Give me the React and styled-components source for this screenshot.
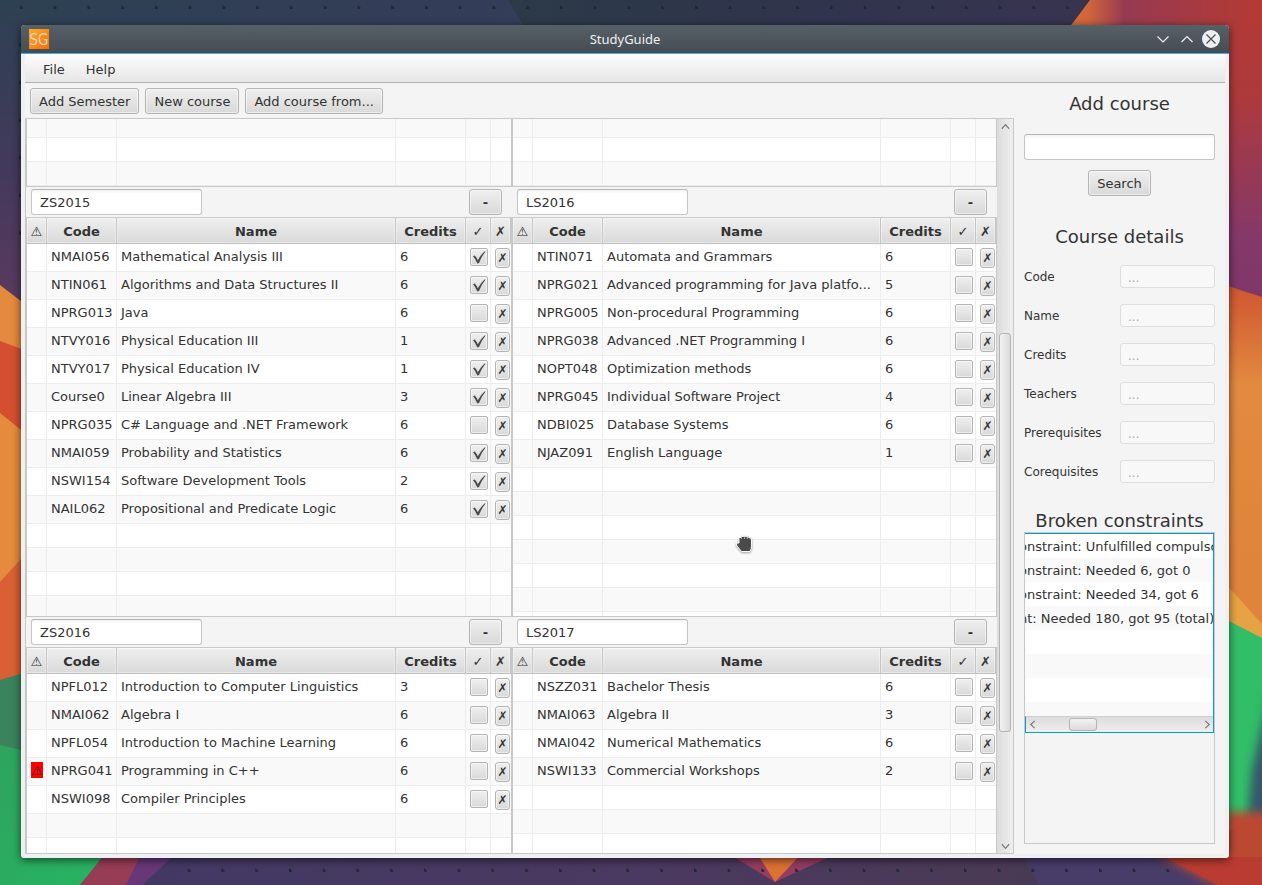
import React from "react";
import styled, { createGlobalStyle, css } from "styled-components";

const GlobalStyle = createGlobalStyle`
  *, *::before, *::after { box-sizing: border-box; }
  body {
    margin: 0;
    font-family: "DejaVu Sans", Verdana, sans-serif;
    font-size: 13px;
    color: #333;
  }
  button, input { font: inherit; color: inherit; }
`;

const raised = css`
  border: 1px solid #b4b4b4;
  border-radius: 3px;
  background: linear-gradient(#efefef, #d9d9d9);
  box-shadow: inset 0 0 0 1px rgba(255, 255, 255, 0.5);
`;

const Desktop = styled.div`
  position: relative;
  display: flex;
  height: 100vh;
  min-height: 600px;
  padding: 25px 33px 27px 21px;
  overflow: hidden;
  background: #3b3a55;
`;

const Wallpaper = styled.svg`
  position: absolute;
  inset: 0;
  width: 100%;
  height: 100%;
`;

const Window = styled.div`
  position: relative;
  display: flex;
  flex: 1;
  flex-direction: column;
  min-width: 0;
  border-radius: 4px 4px 3px 3px;
  background: #eff0f1;
  box-shadow: 0 2px 8px rgba(0, 0, 0, 0.6);
`;

const TitleBar = styled.header`
  display: grid;
  grid-template-columns: 1fr auto 1fr;
  align-items: center;
  height: 29px;
  padding: 0 8px;
  border-bottom: 1px solid #3daee9;
  border-radius: 4px 4px 0 0;
  background: linear-gradient(#566067, #454d53);
`;

const Title = styled.h1`
  margin: 0;
  color: #eff0f1;
  font: 400 13px/20px "Noto Sans", sans-serif;
`;

const WindowControls = styled.div`
  display: flex;
  justify-content: flex-end;
  align-items: center;
  gap: 4px;
`;

const PlainButton = styled.button`
  display: flex;
  align-items: center;
  justify-content: center;
  padding: 0;
  border: 0;
  background: none;
`;

const Client = styled.div`
  display: flex;
  flex: 1;
  flex-direction: column;
  min-height: 0;
  margin: 0 4px 4px;
  background: #f4f4f4;
`;

const MenuBar = styled.nav`
  display: flex;
  gap: 1px;
  height: 29px;
  padding: 0 8px;
  border-bottom: 1px solid #b2b2b2;
  background: linear-gradient(#fdfdfd, #e6e6e6);
`;

const MenuItem = styled.button`
  padding: 2px 10px 0;
  border: 0;
  background: none;
`;

const Content = styled.div`
  display: flex;
  flex: 1;
  min-height: 0;
`;

const Planner = styled.main`
  display: flex;
  flex: 1;
  flex-direction: column;
  min-width: 0;
`;

const Toolbar = styled.div`
  display: flex;
  gap: 6px;
  padding: 5px 5px 4px;
`;

const Button = styled.button`
  ${raised}
  height: 26px;
  padding: 2px 8px 0;
  min-width: 33px;
  white-space: nowrap;
  line-height: 22px;
  font-weight: ${(p) => (p.$strong ? 700 : 400)};
`;

const ScrollPane = styled.div`
  display: flex;
  flex: 1;
  min-height: 0;
  border: 1px solid #c8c8c8;
`;

const Semesters = styled.div`
  display: grid;
  flex: 1;
  grid-template-columns: 486fr 485fr;
  grid-template-rows: 68px 430px 430px;
  min-width: 0;
  overflow: hidden;
`;

const Semester = styled.section`
  display: flex;
  flex-direction: column;
  justify-content: flex-end;
  min-width: 0;
  min-height: 0;
  overflow: hidden;
`;

const SemesterBar = styled.div`
  display: flex;
  justify-content: space-between;
  flex: none;
  padding: 2px 10px 2px 5px;
`;

const TextField = styled.input`
  width: ${(p) => (p.$wide ? "100%" : "171px")};
  height: 26px;
  padding: 0 8px;
  border: 1px solid #c6c6c6;
  border-top-color: #b5b5b5;
  border-radius: 3px;
  background: linear-gradient(#f3f3f3, #fff 4px);
`;

const TableFrame = styled.div`
  display: flex;
  flex: 1;
  flex-direction: column;
  justify-content: ${(p) => (p.$fromEnd ? "flex-end" : "flex-start")};
  min-height: 0;
  overflow: hidden;
  border: 1px solid #c8c8c8;
  border-top-width: ${(p) => (p.$fromEnd ? 0 : 1)}px;
`;

const Table = styled.table`
  flex: none;
  width: 100%;
  table-layout: fixed;
  border-collapse: separate;
  border-spacing: 0;
`;

const Col = styled.col`
  width: ${(p) => p.$w}px;
`;

const HeadCell = styled.th`
  height: 26px;
  padding: 3px 0 0;
  border-right: 1px solid #c4c4c4;
  border-bottom: 1px solid #c0c0c0;
  background: linear-gradient(#efefef, #d9d9d9);
  box-shadow: inset 0 0 0 1px rgba(255, 255, 255, 0.4);
  line-height: 22px;
  text-align: center;
  font-weight: ${(p) => (p.$symbol ? 400 : 700)};
`;

const Row = styled.tr`
  height: ${(p) => (p.$empty ? 24 : 28)}px;
  background: #fff;
  &:nth-child(even) { background: #f9f9f9; }
`;

const Cell = styled.td`
  padding: 0 4px;
  overflow: hidden;
  border-right: 1px solid #ededed;
  border-bottom: 1px solid #ededed;
  line-height: 18px;
  padding-top: ${(p) => (p.$empty ? 0 : 4)}px;
  vertical-align: top;
  white-space: nowrap;
  &:last-child { padding-right: 0; border-right: 0; }
`;

const Warning = styled.span`
  display: block;
  width: 12px;
  height: 16px;
  background: #f00;
`;

const CheckWrap = styled.label`
  position: relative;
  display: block;
  width: 18px;
  height: 18px;
  svg { position: absolute; inset: 0; pointer-events: none; }
  input:not(:checked) + svg { display: none; }
`;

const CheckInput = styled.input`
  ${raised}
  appearance: none;
  display: block;
  width: 18px;
  height: 18px;
  margin: 0;
  border-radius: 2px;
`;

const RemoveButton = styled.button`
  ${raised}
  display: block;
  width: 15px;
  height: 20px;
  padding: 0;
  line-height: 18px;
  font-weight: 700;
  font-size: 12px;
`;

const VScroll = styled.div`
  display: grid;
  grid-template-rows: 14px 200fr 399fr 107fr 14px;
  width: 16px;
  padding: 0 2px;
  background: linear-gradient(90deg, #dcdcdc, #efefef);
`;

const HScroll = styled.div`
  display: grid;
  grid-template-columns: 12px 31fr 28fr 105fr 12px;
  height: 16px;
  padding: 1px 0;
  border-top: 1px solid #d0d0d0;
  border-left: 1px solid #039ed3;
  background: linear-gradient(#dcdcdc, #efefef);
`;

const Thumb = styled.div`
  border: 1px solid #b4b4b4;
  border-radius: 3px;
  background: linear-gradient(${(p) => (p.$vertical ? "90deg" : "180deg")}, #f3f3f3, #dadada);
`;

const Sidebar = styled.aside`
  display: flex;
  flex: none;
  flex-direction: column;
  align-items: center;
  width: 211px;
  padding: 10px;
`;

const Heading = styled.h2`
  margin: 0;
  font-size: 18px;
  font-weight: 400;
  line-height: 22px;
`;

const SearchForm = styled.form`
  display: flex;
  flex-direction: column;
  align-items: center;
  gap: 10px;
  width: 100%;
  margin: 19px 0 30px;
`;

const Details = styled.div`
  display: flex;
  flex-direction: column;
  gap: 16px;
  width: 100%;
  margin: 17px 0 27px;
`;

const DetailRow = styled.label`
  display: flex;
  justify-content: space-between;
  align-items: center;
  font-size: 12px;
`;

const DetailField = styled.input`
  width: 95px;
  height: 23px;
  padding: 2px 7px 0;
  border: 1px solid #dedede;
  border-radius: 3px;
  background: #f8f8f8;
  &::placeholder { color: #aaa; opacity: 1; }
`;

const ConstraintBox = styled.div`
  flex: 1;
  width: 100%;
  min-height: 0;
  overflow: hidden;
  border: 1px solid #c8c8c8;
`;

const ConstraintPane = styled.div`
  border: solid #039ed3;
  border-width: 1px 1px 1px 0;
`;

const ConstraintList = styled.ul`
  height: 182px;
  margin: 0;
  padding: 0;
  overflow: hidden;
  list-style: none;
`;

const Constraint = styled.li`
  height: 24px;
  overflow: hidden;
  background: #fff;
  line-height: 26px;
  white-space: nowrap;
  text-indent: -6px;
  &:nth-child(even) { background: #f9f9f9; }
`;

const HandCursor = styled.svg`
  position: absolute;
  left: 735px;
  top: 534px;
  filter: drop-shadow(0 1px 1px rgba(0, 0, 0, 0.35));
`;

const semesters = [
  {
    name: "ZS2015",
    courses: [
      ["NMAI056", "Mathematical Analysis III", 6, true],
      ["NTIN061", "Algorithms and Data Structures II", 6, true],
      ["NPRG013", "Java", 6, false],
      ["NTVY016", "Physical Education III", 1, true],
      ["NTVY017", "Physical Education IV", 1, true],
      ["Course0", "Linear Algebra III", 3, true],
      ["NPRG035", "C# Language and .NET Framework", 6, false],
      ["NMAI059", "Probability and Statistics", 6, true],
      ["NSWI154", "Software Development Tools", 2, true],
      ["NAIL062", "Propositional and Predicate Logic", 6, true],
    ],
  },
  {
    name: "LS2016",
    courses: [
      ["NTIN071", "Automata and Grammars", 6, false],
      ["NPRG021", "Advanced programming for Java platfo...", 5, false],
      ["NPRG005", "Non-procedural Programming", 6, false],
      ["NPRG038", "Advanced .NET Programming I", 6, false],
      ["NOPT048", "Optimization methods", 6, false],
      ["NPRG045", "Individual Software Project", 4, false],
      ["NDBI025", "Database Systems", 6, false],
      ["NJAZ091", "English Language", 1, false],
    ],
  },
  {
    name: "ZS2016",
    courses: [
      ["NPFL012", "Introduction to Computer Linguistics", 3, false],
      ["NMAI062", "Algebra I", 6, false],
      ["NPFL054", "Introduction to Machine Learning", 6, false],
      ["NPRG041", "Programming in C++", 6, false, true],
      ["NSWI098", "Compiler Principles", 6, false],
    ],
  },
  {
    name: "LS2017",
    courses: [
      ["NSZZ031", "Bachelor Thesis", 6, false],
      ["NMAI063", "Algebra II", 3, false],
      ["NMAI042", "Numerical Mathematics", 6, false],
      ["NSWI133", "Commercial Workshops", 2, false],
    ],
  },
];

const details = ["Code", "Name", "Credits", "Teachers", "Prerequisites", "Corequisites"];

const constraints = [
  "onstraint: Unfulfilled compulsory",
  "onstraint: Needed 6, got 0",
  "onstraint: Needed 34, got 6",
  "nt: Needed 180, got 95 (total)",
  "",
  "",
  "",
  "",
];

function Columns() {
  return (
    <colgroup>
      <Col $w={20} />
      <Col $w={70} />
      <col />
      <Col $w={70} />
      <Col $w={25} />
      <Col $w={20} />
    </colgroup>
  );
}

function EmptyRows({ count }) {
  return Array.from({ length: count }, (_, i) => (
    <Row key={i} $empty>
      {[0, 1, 2, 3, 4, 5].map((c) => (
        <Cell key={c} $empty />
      ))}
    </Row>
  ));
}

function CheckBox({ checked, label }) {
  return (
    <CheckWrap>
      <CheckInput type="checkbox" defaultChecked={checked} aria-label={label} />
      <svg width="18" height="18" viewBox="0 0 18 18">
        <path d="M3 8.2 4.8 7.6Q6.5 9.5 7.8 12.2Q10.5 7 14.8 3.2L15.4 3.7Q11.5 8.5 9 15L7.4 15.4Q5.5 11 3 8.2Z" fill="#4a4a4a" />
      </svg>
    </CheckWrap>
  );
}

function CourseRow({ course: [code, name, credits, done, broken] }) {
  return (
    <Row>
      <Cell>{broken && <Warning>⚠</Warning>}</Cell>
      <Cell>{code}</Cell>
      <Cell>{name}</Cell>
      <Cell>{credits}</Cell>
      <Cell><CheckBox checked={done} label={`${name} completed`} /></Cell>
      <Cell><RemoveButton aria-label={`Remove ${name}`}>✗</RemoveButton></Cell>
    </Row>
  );
}

function SemesterPanel({ name, courses }) {
  return (
    <Semester>
      <SemesterBar>
        <TextField defaultValue={name} aria-label="Semester name" />
        <Button $strong aria-label={`Remove ${name}`}>-</Button>
      </SemesterBar>
      <TableFrame>
        <Table>
          <Columns />
          <thead>
            <tr>
              <HeadCell $symbol>⚠</HeadCell>
              <HeadCell>Code</HeadCell>
              <HeadCell>Name</HeadCell>
              <HeadCell>Credits</HeadCell>
              <HeadCell $symbol>✓</HeadCell>
              <HeadCell $symbol>✗</HeadCell>
            </tr>
          </thead>
          <tbody>
            {courses.map((c) => <CourseRow key={c[0]} course={c} />)}
            <EmptyRows count={16 - courses.length} />
          </tbody>
        </Table>
      </TableFrame>
    </Semester>
  );
}

function PreviousSemester() {
  return (
    <Semester>
      <TableFrame $fromEnd>
        <Table>
          <Columns />
          <tbody><EmptyRows count={4} /></tbody>
        </Table>
      </TableFrame>
    </Semester>
  );
}

function Chevron({ d, size = 9, color = "#7a7a7a", width = 1.3 }) {
  return (
    <svg width={size} height={size} viewBox="0 0 10 10" fill="none" stroke={color} strokeWidth={width}>
      <path d={d} />
    </svg>
  );
}

const UP = "M1 7.5 5 3 9 7.5";
const DOWN = "M1 2.5 5 7 9 2.5";
const LEFT = "M7.5 1 3 5 7.5 9";
const RIGHT = "M2.5 1 7 5 2.5 9";

function Background() {
  return (
    <Wallpaper viewBox="0 0 1262 885" preserveAspectRatio="none" aria-hidden="true">
      <defs>
        <linearGradient id="leftSky" x1="0" y1="0" x2="0" y2="1">
          <stop offset="0" stopColor="#2d4152" />
          <stop offset="0.55" stopColor="#43395c" />
          <stop offset="1" stopColor="#5b3a5e" />
        </linearGradient>
        <linearGradient id="topSky" x1="0" y1="0" x2="1" y2="0">
          <stop offset="0" stopColor="#2d4152" />
          <stop offset="0.3" stopColor="#333d57" />
          <stop offset="1" stopColor="#3a4060" />
        </linearGradient>
        <linearGradient id="topDark" x1="0" y1="0" x2="1" y2="0">
          <stop offset="0" stopColor="#2b3a48" />
          <stop offset="0.5" stopColor="#30344c" />
          <stop offset="1" stopColor="#38344f" />
        </linearGradient>
        <linearGradient id="rightTop" x1="0" y1="0" x2="0" y2="1">
          <stop offset="0" stopColor="#b13a37" />
          <stop offset="0.25" stopColor="#ad3a3c" />
          <stop offset="0.75" stopColor="#85386a" />
          <stop offset="1" stopColor="#7d3668" />
        </linearGradient>
        <linearGradient id="topRed" x1="0" y1="0" x2="1" y2="0">
          <stop offset="0" stopColor="#d96c35" />
          <stop offset="0.14" stopColor="#d0663a" />
          <stop offset="0.32" stopColor="#963a52" />
          <stop offset="1" stopColor="#b53a33" />
        </linearGradient>
        <linearGradient id="rightOrange" x1="0" y1="0" x2="0" y2="1">
          <stop offset="0" stopColor="#cf5532" />
          <stop offset="0.28" stopColor="#e28a3f" />
          <stop offset="1" stopColor="#de8339" />
        </linearGradient>
        <linearGradient id="leftGreen" x1="0" y1="0" x2="1" y2="1">
          <stop offset="0" stopColor="#2ea45f" />
          <stop offset="1" stopColor="#27b462" />
        </linearGradient>
        <linearGradient id="bottomSky" x1="0" y1="0" x2="1" y2="0">
          <stop offset="0" stopColor="#423963" />
          <stop offset="0.5" stopColor="#4b3960" />
          <stop offset="0.8" stopColor="#4a3a55" />
          <stop offset="1" stopColor="#3d3a53" />
        </linearGradient>
        <pattern id="rowDots" width="33.75" height="20" patternUnits="userSpaceOnUse" x="20" y="0">
          <path d="M0 5 3 7.5 2.5 9 0 9Z" fill="#1e2a31" />
        </pattern>
        <pattern id="colDots" width="10" height="37.6" patternUnits="userSpaceOnUse" x="19" y="5">
          <path d="M0 0 3 2.5 2.5 4 0 4Z" fill="#1e2a31" />
        </pattern>
        <filter id="soft"><feGaussianBlur stdDeviation="5" /></filter>
      </defs>
      <rect width="1262" height="30" fill="url(#topSky)" />
      <path d="M508 0H1110V40H530L523 25Z" fill="url(#topDark)" />
      <rect width="30" height="310" fill="url(#leftSky)" />
      <rect x="20" width="1060" height="20" fill="url(#rowDots)" />
      <rect x="19" y="36" width="5" height="220" fill="url(#colDots)" />
      <path d="M0 285 30 308V360H0Z" fill="#e38a3e" />
      <path d="M0 341 30 352V445H0Z" fill="#d44f2f" />
      <path d="M0 413 30 437V590H0Z" fill="#e58b3d" />
      <path d="M0 582 30 549V690H0Z" fill="#d95f34" />
      <path d="M0 680 30 671V760H0Z" fill="#3b835c" />
      <path d="M0 745 30 752V850H120L80 885H0Z" fill="url(#leftGreen)" />
      <path d="M1090 0H1262V40H1060Z" fill="url(#topRed)" />
      <path d="M1225 25H1262V310H1225Z" fill="url(#rightTop)" />
      <path d="M1225 285 1262 297V640H1225Z" fill="url(#rightOrange)" />
      <path d="M1225 583 1262 624V645H1225Z" fill="#e7a343" />
      <path d="M1225 619 1262 638V830H1225Z" fill="#32bd68" />
      <path d="M1275 670V840H1246L1252 770Z" fill="#35566a" filter="url(#soft)" />
      <rect y="850" x="140" width="1060" height="35" fill="url(#bottomSky)" />
      <path d="M1020 850 1038 885H1230L1180 850Z" fill="#483c69" />
      <path d="M108 850H145L128 885H80Z" fill="#963c55" />
      <path d="M143 850H180L142 885H126Z" fill="#673778" />
      <path d="M722 850H845L775 882Z" fill="#963c60" />
      <path d="M755 850H805L775 882Z" fill="#dd7134" />
      <path d="M1155 853 1215 885H1270V812H1225V850Z" fill="#bb4a32" filter="url(#soft)" />
      <path d="M1165 857H1262V885H1218Z" fill="#ba3b31" />
      <g transform="translate(-1 863)">
        <rect x="188" width="984" height="20" fill="url(#rowDots)" />
      </g>
    </Wallpaper>
  );
}

function Logo() {
  return (
    <svg width="20" height="20" viewBox="0 0 20 20" aria-hidden="true">
      <defs>
        <linearGradient id="logoFill" x1="0" y1="0" x2="1" y2="1">
          <stop offset="0" stopColor="#fbae26" />
          <stop offset="1" stopColor="#ff6a00" />
        </linearGradient>
      </defs>
      <rect width="20" height="20" fill="url(#logoFill)" />
      <text
        x="10" y="16" textAnchor="middle" fontSize="15"
        fontFamily="'Liberation Sans Narrow', 'DejaVu Sans Condensed', sans-serif"
        fill="#ded8ce"
      >SG</text>
    </svg>
  );
}

export default function App() {
  return (
    <>
      <GlobalStyle />
      <Desktop>
        <Background />
        <Window>
          <TitleBar>
            <Logo />
            <Title>StudyGuide</Title>
            <WindowControls>
              <PlainButton aria-label="Minimize">
                <svg width="20" height="20" viewBox="0 0 20 20" fill="none" stroke="#eff0f1" strokeWidth="1.2"><path d="M4.5 7.5 10 13 15.5 7.5" /></svg>
              </PlainButton>
              <PlainButton aria-label="Maximize">
                <svg width="20" height="20" viewBox="0 0 20 20" fill="none" stroke="#eff0f1" strokeWidth="1.2"><path d="M4.5 13 10 7.5 15.5 13" /></svg>
              </PlainButton>
              <PlainButton aria-label="Close">
                <svg width="20" height="20" viewBox="0 0 20 20" fill="none">
                  <circle cx="10" cy="10" r="9" fill="#eff0f1" />
                  <path d="M5.5 5.5 14.5 14.5M14.5 5.5 5.5 14.5" stroke="#475057" strokeWidth="1.2" />
                </svg>
              </PlainButton>
            </WindowControls>
          </TitleBar>
          <Client>
            <MenuBar>
              <MenuItem>File</MenuItem>
              <MenuItem>Help</MenuItem>
            </MenuBar>
            <Content>
              <Planner>
                <Toolbar>
                  <Button>Add Semester</Button>
                  <Button>New course</Button>
                  <Button>Add course from...</Button>
                </Toolbar>
                <ScrollPane>
                  <Semesters>
                    <PreviousSemester />
                    <PreviousSemester />
                    {semesters.map((s) => <SemesterPanel key={s.name} {...s} />)}
                  </Semesters>
                  <VScroll>
                    <PlainButton aria-label="Scroll up"><Chevron d={UP} /></PlainButton>
                    <span />
                    <Thumb $vertical />
                    <span />
                    <PlainButton aria-label="Scroll down"><Chevron d={DOWN} /></PlainButton>
                  </VScroll>
                </ScrollPane>
              </Planner>
              <Sidebar>
                <Heading>Add course</Heading>
                <SearchForm onSubmit={(e) => e.preventDefault()}>
                  <TextField $wide aria-label="Course to add" />
                  <Button>Search</Button>
                </SearchForm>
                <Heading>Course details</Heading>
                <Details>
                  {details.map((d) => (
                    <DetailRow key={d}>
                      {d}
                      <DetailField placeholder="..." disabled />
                    </DetailRow>
                  ))}
                </Details>
                <Heading>Broken constraints</Heading>
                <ConstraintBox>
                  <ConstraintPane>
                    <ConstraintList>
                      {constraints.map((c, i) => <Constraint key={i}>{c}</Constraint>)}
                    </ConstraintList>
                    <HScroll>
                      <PlainButton aria-label="Scroll left"><Chevron d={LEFT} /></PlainButton>
                      <span />
                      <Thumb />
                      <span />
                      <PlainButton aria-label="Scroll right"><Chevron d={RIGHT} /></PlainButton>
                    </HScroll>
                  </ConstraintPane>
                </ConstraintBox>
              </Sidebar>
            </Content>
          </Client>
        </Window>
        <HandCursor width="18" height="19" viewBox="0 0 18 19" aria-hidden="true">
          <path
            d="M4 9V4.5Q4.5 3 6 3.5Q6.5 2 8.5 2.5Q10 1.5 11.5 2.7Q13.3 2.3 14 3.6Q16.5 3.5 16.5 6V12Q16.5 15 15 17.5H6.5L2 12Q.8 9.5 2 9Z"
            fill="#4a4a4a" stroke="#fff" strokeWidth="1"
          />
          <path d="M6.5 3V5M9.5 2V5M12.5 2.5V5" stroke="#ddd" strokeWidth="0.6" />
        </HandCursor>
      </Desktop>
    </>
  );
}
